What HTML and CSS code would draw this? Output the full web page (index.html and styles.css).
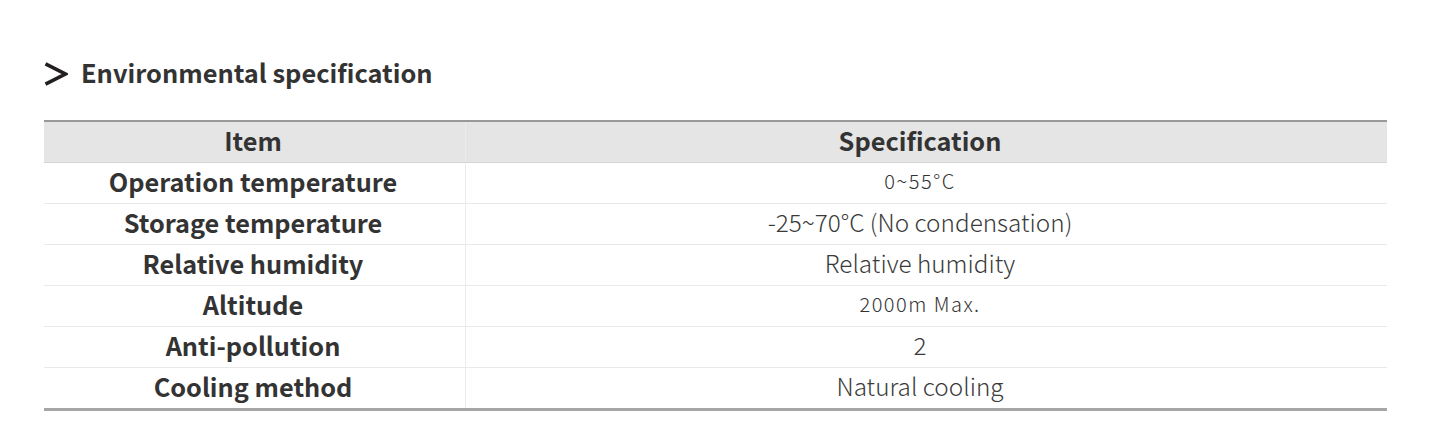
FILE: index.html
```html
<!DOCTYPE html>
<html lang="en">
<head>
<meta charset="utf-8">
<title>Environmental specification</title>
<link rel="stylesheet" href="styles.css">
</head>
<body>
<section class="spec">
  <h2 class="spec-title">
    <svg class="chev" width="24" height="24" viewBox="0 0 24 24" aria-hidden="true">
      <polyline points="1.5,1.8 21.3,12 1.5,22.2" fill="none" stroke="#231f20" stroke-width="3.6" stroke-linejoin="miter"/>
    </svg>
    <span>Environmental specification</span>
  </h2>
  <table class="spec-table">
    <thead>
      <tr><th class="c-item">Item</th><th class="c-spec">Specification</th></tr>
    </thead>
    <tbody>
      <tr><td class="c-item">Operation temperature</td><td class="c-spec sm">0~55°C</td></tr>
      <tr><td class="c-item">Storage temperature</td><td class="c-spec">-25~70°C (No condensation)</td></tr>
      <tr><td class="c-item">Relative humidity</td><td class="c-spec">Relative humidity</td></tr>
      <tr><td class="c-item">Altitude</td><td class="c-spec sm">2000m Max.</td></tr>
      <tr><td class="c-item">Anti-pollution</td><td class="c-spec">2</td></tr>
      <tr><td class="c-item">Cooling method</td><td class="c-spec">Natural cooling</td></tr>
    </tbody>
  </table>
</section>
</body>
</html>
```
FILE: styles.css
```css
html, body {
  margin: 0;
  padding: 0;
  background: #ffffff;
}
body {
  font-family: "Noto Sans CJK SC", "Noto Sans", sans-serif;
  color: #333333;
}
.spec {
  padding: 58px 53px 0 44px;
}
.spec-title {
  display: flex;
  align-items: center;
  gap: 13px;
  margin: 0 0 30px 0;
  font-size: 25.4px;
  font-weight: 700;
  line-height: 32px;
  color: #333333;
}
.spec-title span {
  position: relative;
  top: -2px;
}
.chev {
  display: block;
  flex: none;
}
.spec-table {
  width: 100%;
  border-collapse: collapse;
  border-top: 2px solid #999999;
  border-bottom: 3px solid #a6a6a6;
}
.spec-table th,
.spec-table td {
  height: 35px;
  padding: 0 0 5px 0;
  text-align: center;
  vertical-align: middle;
  border-bottom: 1px solid #e9e9e9;
  line-height: 26px;
}
.spec-table th {
  background: #e5e5e5;
  font-size: 25.3px;
  font-weight: 700;
  border-bottom: 1px solid #d6d6d6;
}
.spec-table td.c-item {
  font-size: 25.3px;
  font-weight: 700;
}
.spec-table .c-item {
  width: 418px;
  padding-right: 3px;
  border-right: 1px solid #ececec;
}
.spec-table .c-spec {
  padding-right: 13px;
}
.spec-table td.c-spec {
  font-family: "Noto Sans CJK SC Light", "Noto Sans CJK SC DemiLight", "Noto Sans CJK SC", sans-serif;
  font-size: 24.3px;
  font-weight: 300;
  color: #3a3a3a;
}
.spec-table td.c-spec.sm {
  font-size: 20px;
  letter-spacing: 1.5px;
  color: #333333;
}
```
